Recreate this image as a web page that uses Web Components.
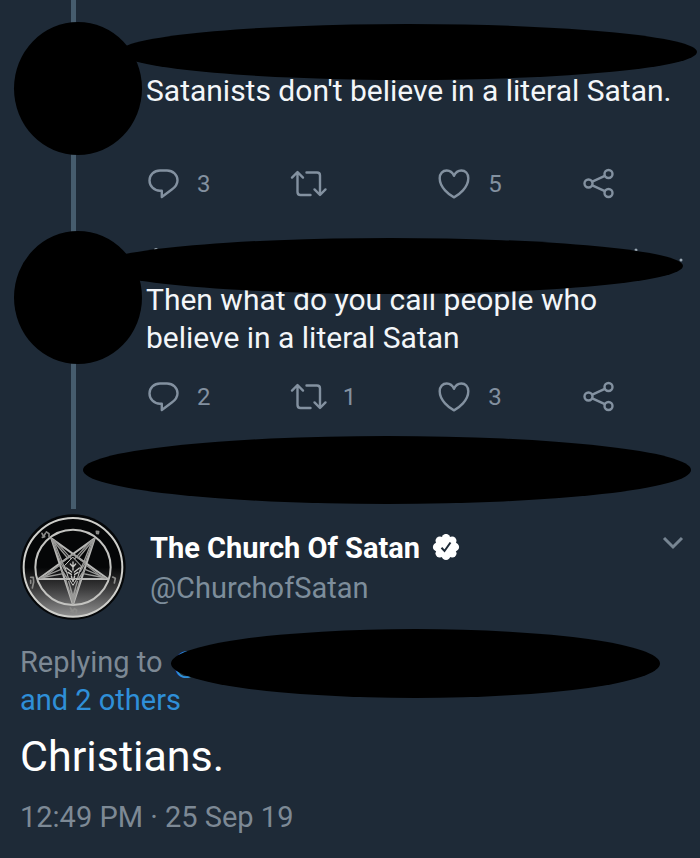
<!DOCTYPE html>
<html lang="en">
<head>
<meta charset="utf-8">
<meta name="viewport" content="width=device-width, initial-scale=1">
<title>Thread</title>
<style>
  body {
    margin: 0;
    background: #1e2a37;
    color: #f3f6f9;
    font-family: Roboto, "Liberation Sans", sans-serif;
    font-size: 29px;
    line-height: 38px;
  }
</style>
</head>
<body>
<tweet-thread>
  <tweet-post class="first" replies="3" likes="5">Satanists don't believe in a literal Satan.</tweet-post>
  <tweet-post class="second" replies="2" retweets="1" likes="3">Then what do you call people who believe in a literal Satan</tweet-post>
</tweet-thread>
<tweet-detail>
  <tweet-author slot="author" handle="@ChurchofSatan">The Church Of Satan</tweet-author>
  Christians.
  <time slot="time" datetime="2019-09-25T12:49">12:49 PM · 25 Sep 19</time>
</tweet-detail>

<script>
const icons = {
  reply: '<path d="M13 2.5h7c6 0 10.5 4.3 10.5 9.7 0 4-2.2 6.8-5.7 9.3L14.8 29v-6.3H13C7 22.7 2.5 18 2.5 12.500S7 2.5 13 2.5z"/>',
  retweet: '<path d="M-1 9.600l5.500-5.600L10 9.600M4.500 5v19q0 3 3 3h10M13.500 4.500h10.500q3 0 3 3v19M21.500 21.400l5.500 5.600 5.500-5.600"/>',
  like: '<path d="M16 29.300C11.200 27 1.700 19.500 1.700 10.300 1.700 5.500 4.700 2.500 8.700 2.500c3.300 0 5.900 2 7.300 5.300 1.400-3.300 4-5.300 7.300-5.300 4 0 7 3 7 7.800 0 9.200-9.500 16.700-14.300 19z"/>',
  share: '<circle cx="4.500" cy="15.500" r="4"/><circle cx="24.500" cy="6" r="4"/><circle cx="24.500" cy="25" r="4"/><path d="M8.300 13.700l12.500-5.900M8.300 17.300l12.500 5.900"/>'
};

class TweetAction extends HTMLElement {
  connectedCallback() {
    this.attachShadow({ mode: 'open' });
    this.shadowRoot.innerHTML = `
      <style>
        :host { display: block; }
        button {
          display: flex;
          align-items: center;
          gap: 18px;
          padding: 0;
          border: 0;
          background: none;
          color: #8391a0;
          font: 24px/32px Roboto, sans-serif;
          cursor: pointer;
        }
        svg {
          width: 32px;
          height: 32px;
          overflow: visible;
          fill: none;
          stroke: currentColor;
          stroke-width: 2.4;
          stroke-linecap: round;
          stroke-linejoin: round;
        }
      </style>
      <button type="button">
        <svg viewBox="0 0 32 32">${icons[this.getAttribute('icon')]}</svg>
        <slot></slot>
      </button>
    `;
  }
}
customElements.define('tweet-action', TweetAction);

class RedactedMark extends HTMLElement {
  connectedCallback() {
    this.attachShadow({ mode: 'open' });
    this.shadowRoot.innerHTML = `
      <style>
        :host {
          display: block;
          background: #000;
          border-radius: 50%;
        }
      </style>
    `;
  }
}
customElements.define('redacted-mark', RedactedMark);

class TweetThread extends HTMLElement {
  connectedCallback() {
    this.attachShadow({ mode: 'open' });
    this.shadowRoot.innerHTML = `
      <style>
        :host {
          display: block;
          padding-bottom: 5px;
          background: linear-gradient(#465c6d, #465c6d) 71px 0 / 5px 100% no-repeat;
        }
        redacted-mark {
          height: 68px;
          margin: 0 9px 0 83px;
        }
      </style>
      <slot></slot>
      <redacted-mark></redacted-mark>
    `;
  }
}
customElements.define('tweet-thread', TweetThread);

class TweetPost extends HTMLElement {
  connectedCallback() {
    const count = (name) => this.getAttribute(name) || '';
    this.attachShadow({ mode: 'open' });
    this.shadowRoot.innerHTML = `
      <style>
        :host {
          display: grid;
          grid-template-columns: 128px 1fr;
          column-gap: 4px;
          align-items: start;
          position: relative;
          padding: 22px 24px 0 14px;
        }
        :host(.first) { min-height: 187px; }
        :host(.second) { min-height: 205px; }
        .avatar { height: 133px; }
        .name {
          position: absolute;
          top: 24px;
          left: 119px;
          right: 3px;
          height: 56px;
        }
        :host(.second) .name {
          top: 29px;
          left: 97px;
          right: 17px;
        }
        .content { padding-top: 50px; }
        p { margin: 0; font-size: 30px; }
        .actions {
          display: grid;
          grid-template-columns: repeat(3, 1fr) 32px;
          margin: 24px 60px 0 1px;
        }
        :host(.first) .actions { margin-top: 58px; }
        .traces {
          position: absolute;
          top: 38px;
          left: 152px;
          width: 532px;
          height: 16px;
          fill: #9aa7b2;
        }
      </style>
      <redacted-mark class="avatar"></redacted-mark>
      <div class="content">
        <p><slot></slot></p>
        <div class="actions">
          <tweet-action icon="reply">${count('replies')}</tweet-action>
          <tweet-action icon="retweet">${count('retweets')}</tweet-action>
          <tweet-action icon="like">${count('likes')}</tweet-action>
          <tweet-action icon="share"></tweet-action>
        </div>
      </div>
      ${this.classList.contains('second') ? `
      <svg class="traces" viewBox="0 0 532 16">
        <circle cx="4" cy="3" r="2"/><circle cx="484" cy="3" r="1.5"/><circle cx="529" cy="13" r="1.5"/>
      </svg>` : ''}
      <redacted-mark class="name"></redacted-mark>
    `;
  }
}
customElements.define('tweet-post', TweetPost);

class SigilAvatar extends HTMLElement {
  connectedCallback() {
    this.attachShadow({ mode: 'open' });
    this.shadowRoot.innerHTML = `
      <style>
        :host { display: block; }
        svg { display: block; width: 107px; height: 107px; }
      </style>
      <svg viewBox="17 15 321 321" fill="none" stroke-linejoin="round" stroke-linecap="round">
        <defs>
          <linearGradient id="shade" x1="0" y1="0" x2="0" y2="1">
            <stop offset="0.5" stop-color="#050607"/>
            <stop offset="0.72" stop-color="#3c3c3d"/>
            <stop offset="1" stop-color="#929292"/>
          </linearGradient>
        </defs>
        <circle cx="176" cy="177" r="158" fill="#050709"/>
        <circle cx="176" cy="178" r="148" fill="url(#shade)" stroke="#cfcfcb" stroke-width="6"/>
        <circle cx="176" cy="178" r="113" stroke="#c4c4c1" stroke-width="6"/>
        <!-- star -->
        <path d="M111 91L176 290L241 91L72 213H281z" stroke="#b9b9b7" stroke-width="6"/>
        <!-- horns, ears and beard -->
        <g stroke="#9a9a98" stroke-width="4">
          <path d="M111 91L160 150L176 139L192 150L241 91L212 165L186 146M111 91L140 165L166 146"/>
          <path d="M118 98L151 180M234 98L201 180M121 97L176 158L231 97"/>
          <path d="M78 210L140 184L158 210M78 210L150 196M274 210L212 184L194 210M274 210L202 196"/>
          <path d="M90 207L141 168L154 190M262 207L211 168L198 190"/>
          <path d="M154 215L176 285L198 215M163 220L176 265L189 220M168 240L176 275L184 240"/>
        </g>
        <!-- face -->
        <g stroke="#c9c9c6" stroke-width="4">
          <path d="M151 174L162 209L176 232L190 209L201 174L176 148z" fill="#171718" stroke-width="3"/>
          <path d="M157 180L172 192M195 180L180 192M161 193L171 199M191 193L181 199"/>
          <path d="M176 162V186M168 168L176 177L184 168M171 204L176 221L181 204M166 211L176 216L186 211"/>
        </g>
        <!-- marks between the rings -->
        <g stroke="#8b8b89" stroke-width="5">
          <path d="M83 76L88 86L93 76M96 72L104 77V87M84 88L91 86"/>
          <path d="M246 70L253 71L252 77L247 76z"/>
          <path d="M49 208H57L58 222L54 240M49 217V226"/>
          <path d="M295 207L303 211L300 225"/>
          <path d="M168 300L174 309L181 303M180 302L187 306L185 317M170 310L178 313"/>
        </g>
      </svg>
    `;
  }
}
customElements.define('sigil-avatar', SigilAvatar);

class TweetAuthor extends HTMLElement {
  connectedCallback() {
    this.attachShadow({ mode: 'open' });
    this.shadowRoot.innerHTML = `
      <style>
        :host {
          display: flex;
          align-items: flex-start;
          gap: 23px;
        }
        .who { flex: 1; padding-top: 16px; }
        .name {
          display: flex;
          align-items: center;
          gap: 12px;
          color: #fff;
          font-weight: bold;
          line-height: 38px;
        }
        .badge { width: 28px; height: 28px; }
        .handle { color: #7d8d9b; line-height: 42px; }
        button {
          margin: 20px 15px 0 0;
          padding: 0;
          border: 0;
          background: none;
          cursor: pointer;
        }
        button svg { display: block; width: 24px; height: 20px; }
      </style>
      <sigil-avatar></sigil-avatar>
      <div class="who">
        <div class="name">
          <slot></slot>
          <svg class="badge" viewBox="0 1 28 28">
            <g fill="#fff">
              <circle cx="14" cy="14" r="10.5"/>
              <circle cx="14" cy="5.2" r="4.3"/><circle cx="20.2" cy="7.8" r="4.3"/>
              <circle cx="22.8" cy="14" r="4.3"/><circle cx="20.2" cy="20.2" r="4.3"/>
              <circle cx="14" cy="22.8" r="4.3"/><circle cx="7.8" cy="20.2" r="4.3"/>
              <circle cx="5.2" cy="14" r="4.3"/><circle cx="7.8" cy="7.8" r="4.3"/>
            </g>
            <path d="M9.5 14.8l3 3.2 6-8.5" fill="none" stroke="#1e2a37" stroke-width="2"/>
          </svg>
        </div>
        <div class="handle">${this.getAttribute('handle')}</div>
      </div>
      <button type="button">
        <svg viewBox="0 0 24 20" fill="none" stroke="#778592" stroke-width="3">
          <path d="M3 5l9 9 9-9"/>
        </svg>
      </button>
    `;
  }
}
customElements.define('tweet-author', TweetAuthor);

class TweetDetail extends HTMLElement {
  connectedCallback() {
    this.attachShadow({ mode: 'open' });
    this.shadowRoot.innerHTML = `
      <style>
        :host {
          display: block;
          padding: 4px 0 22px 20px;
        }
        .replying {
          position: relative;
          margin-top: 23px;
          color: #7d8995;
        }
        a { color: #2f8fd8; text-decoration: none; }
        .mention { margin-left: 4px; }
        .others { display: block; width: fit-content; }
        redacted-mark {
          position: absolute;
          top: -14px;
          left: 151px;
          right: 40px;
          height: 69px;
        }
        .text {
          margin: 11px 0;
          color: #fff;
          font-size: 43px;
          line-height: 52px;
        }
        .time { color: #7d8995; padding-top: 5px; }
      </style>
      <slot name="author"></slot>
      <div class="replying">
        Replying to <a class="mention" href="#">@</a>
        <a class="others" href="#">and 2 others</a>
        <redacted-mark></redacted-mark>
      </div>
      <div class="text"><slot></slot></div>
      <div class="time"><slot name="time"></slot></div>
    `;
  }
}
customElements.define('tweet-detail', TweetDetail);
</script>
</body>
</html>
